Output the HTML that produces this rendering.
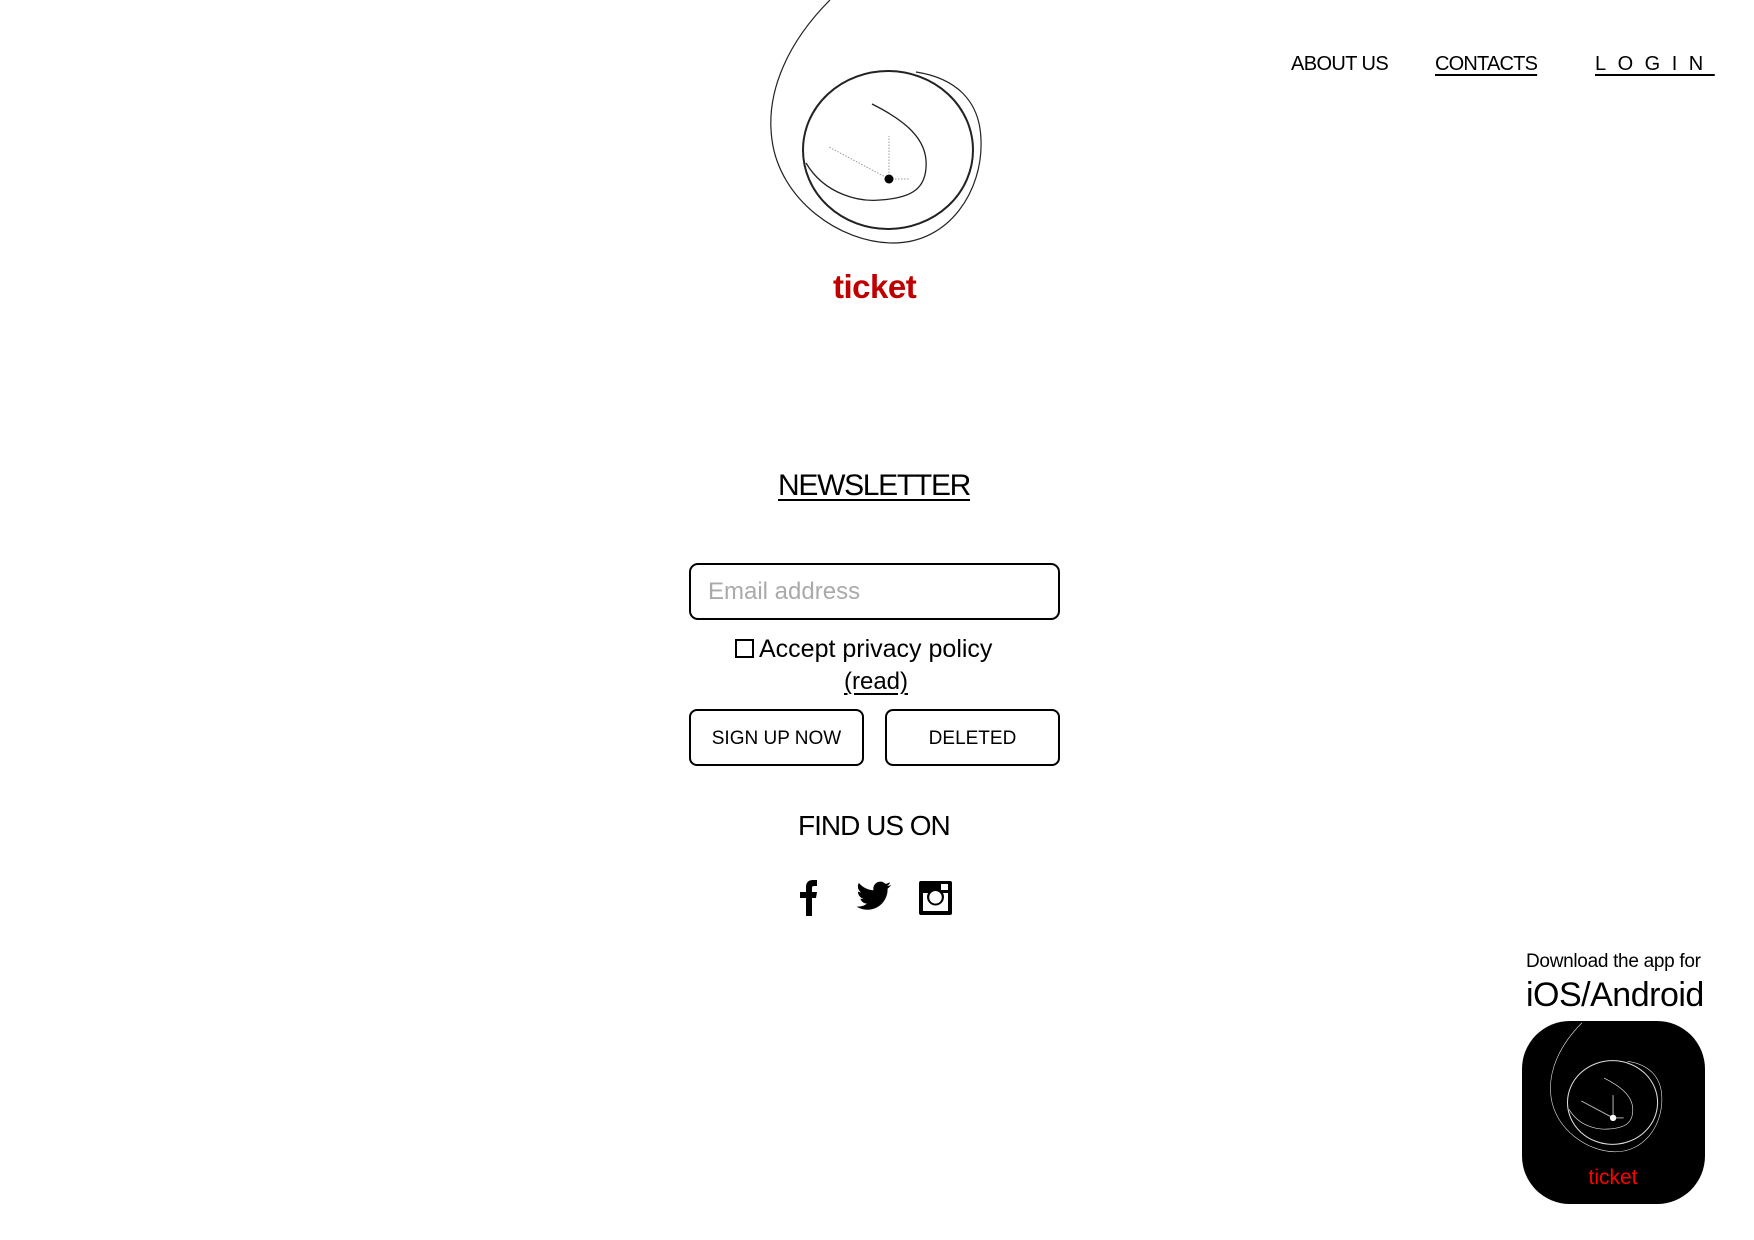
<!DOCTYPE html>
<html><head><meta charset="utf-8"><style>
body{margin:0;width:1754px;height:1240px;background:#fff;position:relative;overflow:hidden;font-family:"Liberation Sans",sans-serif;color:#000}
.a{position:absolute;white-space:nowrap}
.nav{font-size:20px;top:53px}
.u{text-decoration:underline;text-underline-offset:4px;text-decoration-thickness:1.5px}
.btn{position:absolute;top:709px;height:50px;width:171px;border:2px solid #000;border-radius:8px;font-size:19px;display:flex;align-items:center;justify-content:center;padding-top:3px;box-sizing:content-box}
</style></head><body>
<svg width="1754" height="1240" style="position:absolute;left:0;top:0">
<defs>
<g id="logo" fill="none">
<path d="M60,0 C20,40 -5,90 2,140 C10,200 70,243 123,243 C180,243 213,190 211,140 C210,100 185,78 146,72" stroke-width="1.2"/>
<ellipse cx="118" cy="150" rx="85" ry="79" stroke-width="2"/>
<path d="M36,163 C55,195 90,202 110,200 C140,198 158,190 156,160 C154,135 130,118 102,104" stroke-width="1.3"/>
</g>
</defs>
<g transform="translate(770,0)" stroke="#222"><use href="#logo"/>
<path d="M119,179V136M119,179L59,147M119,179H139" stroke="#999" stroke-dasharray="1.5,1.5" stroke-width="1"/>
<circle cx="119" cy="179" r="4.5" fill="#000" stroke="none"/></g>
<clipPath id="c"><rect x="1522" y="1021" width="183" height="183" rx="48"/></clipPath>
<rect x="1522" y="1021" width="183" height="183" rx="48" fill="#000"/>
<g clip-path="url(#c)"><g transform="translate(1550,1023) scale(0.53)" stroke="#ddd"><use href="#logo"/>
<path d="M119,179V136M119,179L59,147M119,179H139" stroke="#aaa" stroke-width="2"/>
<circle cx="119" cy="179" r="6" fill="#fff" stroke="none"/></g></g>
<text x="1613" y="1184" text-anchor="middle" fill="#f00" font-family="Liberation Sans" font-size="21">ticket</text>
</svg>
<div class="a" style="left:833px;top:268px;font-size:33px;color:#c00000;font-weight:bold;letter-spacing:-0.5px">ticket</div>
<div class="a nav" style="left:1291px;letter-spacing:-0.6px">ABOUT US</div>
<div class="a nav u" style="left:1435px;letter-spacing:-0.8px">CONTACTS</div>
<div class="a nav u" style="left:1595px;letter-spacing:11.5px">LOGIN</div>
<div class="a u" style="left:778px;top:469px;font-size:30px;letter-spacing:-1.3px">NEWSLETTER</div>
<div class="a" style="left:689px;top:563px;width:367px;height:53px;border:2px solid #000;border-radius:9px"></div>
<div class="a" style="left:708px;top:578px;font-size:24px;color:#aaa">Email address</div>
<div class="a" style="left:735px;top:639px;width:15px;height:15px;border:2px solid #000"></div>
<div class="a" style="left:759px;top:635px;font-size:25px">Accept privacy policy</div>
<div class="a u" style="left:844px;top:668px;font-size:24px">(read)</div>
<div class="btn" style="left:689px">SIGN UP NOW</div>
<div class="btn" style="left:885px">DELETED</div>
<div class="a" style="left:798px;top:810px;font-size:28px;letter-spacing:-1px">FIND US ON</div>
<svg class="a" style="left:795px;top:878px" width="160" height="42">
<path d="M11,38V20H5v-6h6V9c0-5,3-7,7-7h4v6h-3c-1.5,0-2,.7-2,2v4h5l-1,6h-4v18z"/>
<path d="M97,6c-1.3.6-2.7 1-4 1.1 1.5-.9 2.6-2.3 3.1-3.9-1.4.8-2.9 1.4-4.5 1.7-1.3-1.4-3.2-2.3-5.2-2.3-3.9 0-7.1 3.2-7.1 7.1 0 .6.1 1.1.2 1.6-5.9-.3-11.1-3.1-14.6-7.4-.6 1.1-1 2.3-1 3.6 0 2.5 1.3 4.6 3.2 5.9-1.2 0-2.3-.4-3.2-.9v.1c0 3.4 2.4 6.3 5.7 7-.6.2-1.2.2-1.9.2-.5 0-.9 0-1.3-.1.9 2.8 3.5 4.9 6.6 4.9-2.4 1.9-5.5 3-8.8 3-.6 0-1.1 0-1.7-.1 3.1 2 6.9 3.2 10.9 3.2 13 0 20.2-10.8 20.2-20.2v-.9c1.4-1 2.6-2.2 3.5-3.6z" transform="translate(-1,1)"/>
<path fill-rule="evenodd" d="M126,3h29a2,2 0 0 1 2,2v30a2,2 0 0 1-2,2h-29a2,2 0 0 1-2-2v-30a2,2 0 0 1 2-2zM128,15v18h25v-18h-5a8.5,8.5 0 1 1-15,0zM140.5,13a6.3,6.3 0 1 0 .01,0zM146,6v6h7v-6z"/>
</svg>
<div class="a" style="left:1526px;top:951px;font-size:19px;letter-spacing:-0.3px">Download the app for</div>
<div class="a" style="left:1526px;top:976px;font-size:34px;letter-spacing:-0.5px">iOS/Android</div>
</body></html>
